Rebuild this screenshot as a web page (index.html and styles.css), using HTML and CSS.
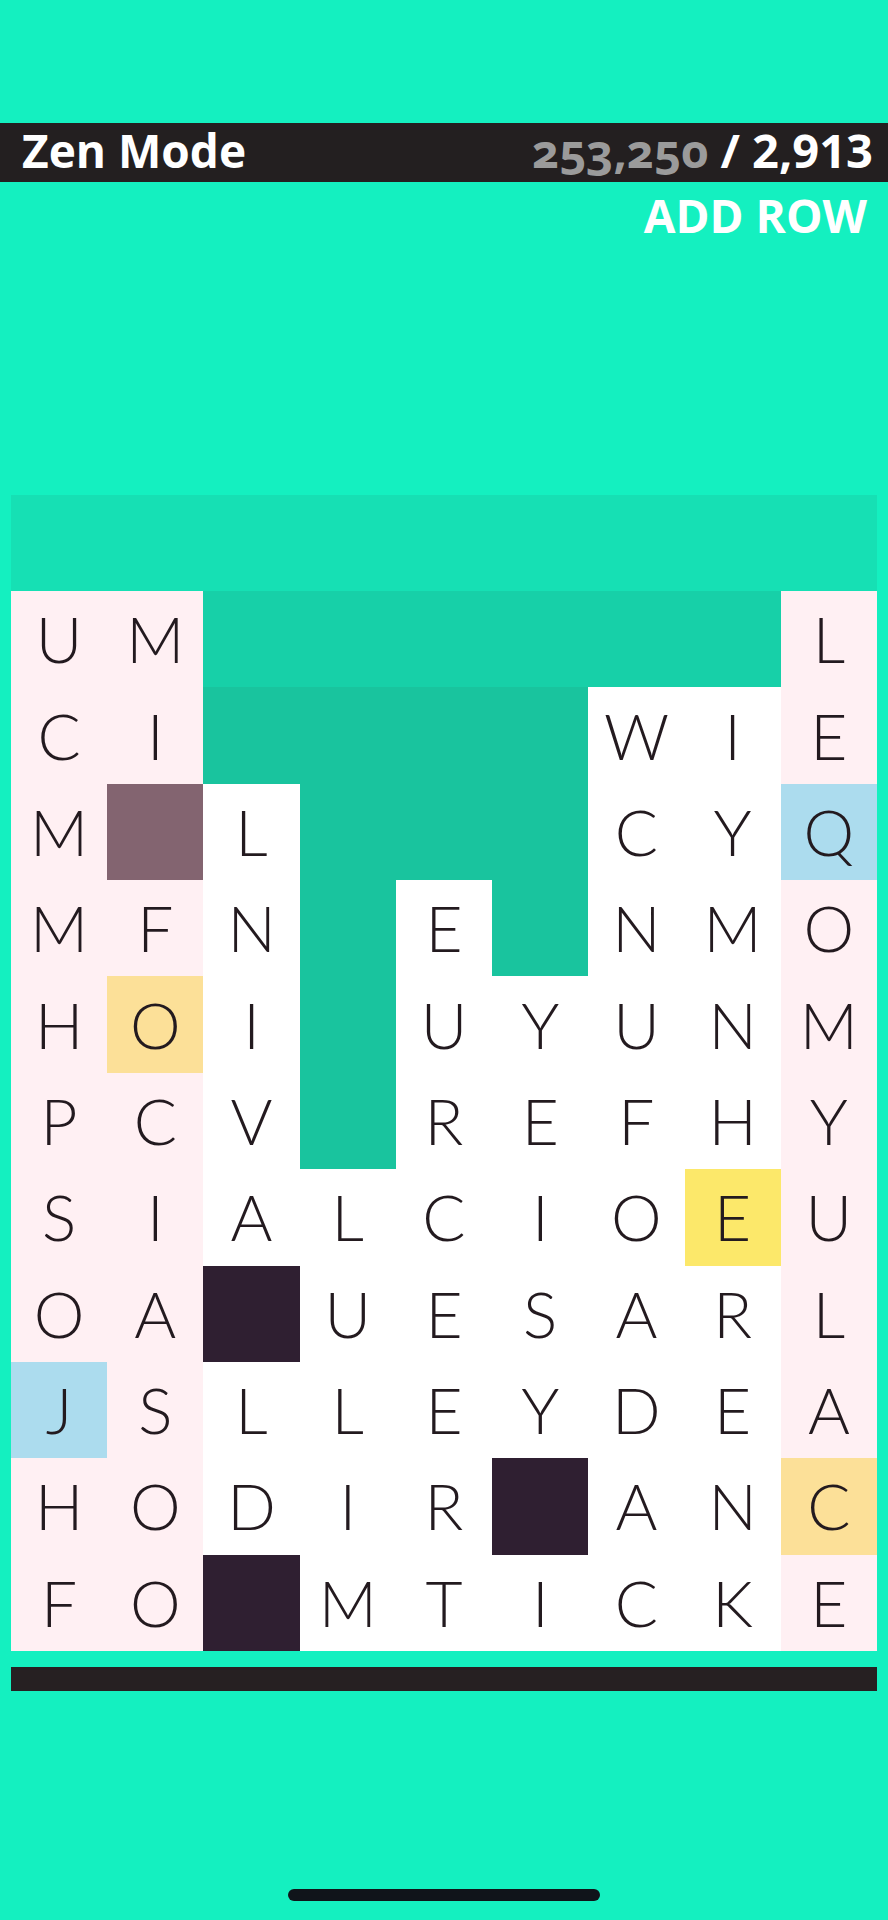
FILE: index.html
```html
<!DOCTYPE html>
<html lang="en">
<head>
<meta charset="utf-8">
<title>Zen Mode</title>
<link rel="stylesheet" href="styles.css">
</head>
<body>
<div class="screen">
  <div class="top-space"></div>
  <header class="bar">
    <div class="mode">Zen Mode</div>
    <div class="score"><span class="best">253,250</span> / 2,913</div>
  </header>
  <div class="add-row">ADD ROW</div>

  <main class="board">
    <div class="band"></div>

    <div class="cell pk">U</div><div class="cell pk">M</div><div class="cell e1"></div><div class="cell e1"></div><div class="cell e1"></div><div class="cell e1"></div><div class="cell e1"></div><div class="cell e1"></div><div class="cell pk">L</div>

    <div class="cell pk">C</div><div class="cell pk">I</div><div class="cell e2"></div><div class="cell e2"></div><div class="cell e2"></div><div class="cell e2"></div><div class="cell wh">W</div><div class="cell wh">I</div><div class="cell pk">E</div>

    <div class="cell pk">M</div><div class="cell purple"></div><div class="cell wh">L</div><div class="cell e2"></div><div class="cell e2"></div><div class="cell e2"></div><div class="cell wh">C</div><div class="cell wh">Y</div><div class="cell blue">Q</div>

    <div class="cell pk">M</div><div class="cell pk">F</div><div class="cell wh">N</div><div class="cell e2"></div><div class="cell wh">E</div><div class="cell e2"></div><div class="cell wh">N</div><div class="cell wh">M</div><div class="cell pk">O</div>

    <div class="cell pk">H</div><div class="cell gold">O</div><div class="cell wh">I</div><div class="cell e2"></div><div class="cell wh">U</div><div class="cell wh">Y</div><div class="cell wh">U</div><div class="cell wh">N</div><div class="cell pk">M</div>

    <div class="cell pk">P</div><div class="cell pk">C</div><div class="cell wh">V</div><div class="cell e2"></div><div class="cell wh">R</div><div class="cell wh">E</div><div class="cell wh">F</div><div class="cell wh">H</div><div class="cell pk">Y</div>

    <div class="cell pk">S</div><div class="cell pk">I</div><div class="cell wh">A</div><div class="cell wh">L</div><div class="cell wh">C</div><div class="cell wh">I</div><div class="cell wh">O</div><div class="cell yellow">E</div><div class="cell pk">U</div>

    <div class="cell pk">O</div><div class="cell pk">A</div><div class="cell dark"></div><div class="cell wh">U</div><div class="cell wh">E</div><div class="cell wh">S</div><div class="cell wh">A</div><div class="cell wh">R</div><div class="cell pk">L</div>

    <div class="cell blue">J</div><div class="cell pk">S</div><div class="cell wh">L</div><div class="cell wh">L</div><div class="cell wh">E</div><div class="cell wh">Y</div><div class="cell wh">D</div><div class="cell wh">E</div><div class="cell pk">A</div>

    <div class="cell pk">H</div><div class="cell pk">O</div><div class="cell wh">D</div><div class="cell wh">I</div><div class="cell wh">R</div><div class="cell dark"></div><div class="cell wh">A</div><div class="cell wh">N</div><div class="cell gold">C</div>

    <div class="cell pk">F</div><div class="cell pk">O</div><div class="cell dark"></div><div class="cell wh">M</div><div class="cell wh">T</div><div class="cell wh">I</div><div class="cell wh">C</div><div class="cell wh">K</div><div class="cell pk">E</div>
  </main>

  <div class="base-bar"></div>
  <div class="home-indicator"></div>
</div>
</body>
</html>
```

FILE: styles.css
```css
html, body {
  margin: 0;
  padding: 0;
}

body {
  background: #14f0c0;
  width: 888px;
  height: 1920px;
  overflow: hidden;
  font-family: "Open Sans", "Liberation Sans", sans-serif;
}

.screen {
  display: flex;
  flex-direction: column;
}

.top-space {
  height: 123px;
}

.bar {
  height: 59px;
  box-sizing: border-box;
  background: #231f20;
  display: flex;
  justify-content: space-between;
  align-items: flex-start;
  padding: 0 15px 0 22px;
  color: #ffffff;
  font-weight: 700;
}

.mode {
  font-size: 46px;
  line-height: 55px;
}

.score {
  font-size: 47px;
  line-height: 55px;
}

.best {
  color: #9b9b9b;
  font-variant-numeric: oldstyle-nums;
}

.add-row {
  align-self: flex-end;
  margin: 4px 21px 0 0;
  font-size: 46px;
  line-height: 58px;
  font-weight: 700;
  color: #ffffff;
}

.board {
  margin: 251px 11px 0 11px;
  display: grid;
  grid-template-columns: repeat(9, 1fr);
  grid-template-rows: 96px;
  grid-auto-rows: 96.36px;
  font-family: "Lato", "Open Sans", sans-serif;
  font-weight: 300;
  font-size: 64px;
  color: #231a1f;
}

.band {
  grid-column: 1 / -1;
  background: #16e0b4;
}

.cell {
  display: flex;
  align-items: center;
  justify-content: center;
  line-height: 1;
}

.pk { background: #fff0f3; }
.wh { background: #ffffff; }
.e1 { background: #17d0a8; }
.e2 { background: #19c49e; }
.purple { background: #836470; }
.gold { background: #fce098; }
.blue { background: #acdcee; }
.yellow { background: #fce86a; }
.dark { background: #2f1f31; }

.base-bar {
  margin: 16px 11px 0 11px;
  height: 24px;
  background: #262022;
}

.home-indicator {
  align-self: center;
  margin-top: 198px;
  width: 312px;
  height: 12px;
  border-radius: 6px;
  background: #10141a;
}
```
